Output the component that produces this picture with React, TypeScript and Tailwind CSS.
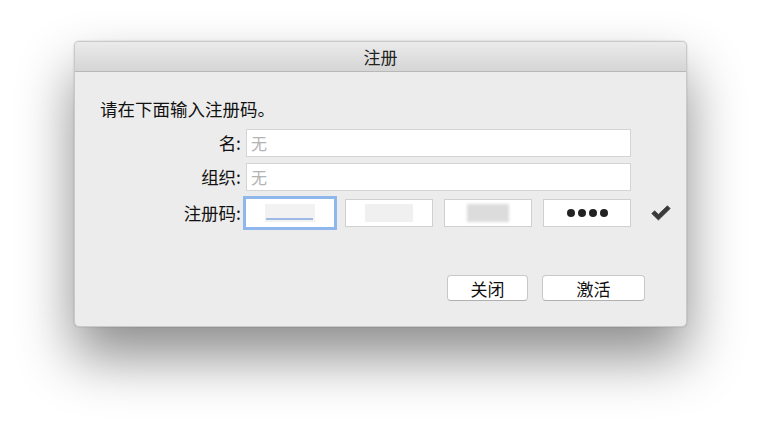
import React from 'react'

const font = { fontFamily: '"Noto Sans CJK SC", "Noto Sans", sans-serif' }

function Field({ placeholder }: { placeholder: string }) {
  return (
    <div className="flex h-[28px] w-[385px] items-center border border-[#d4d4d4] bg-white px-[4px] text-[16px] font-normal text-[#b3b3b3]">
      {placeholder}
    </div>
  )
}

export default function App() {
  return (
    <div className="h-[433px] w-[760px] overflow-hidden bg-white pl-[74px] pt-[41px]" style={font}>
      <div className="flex h-[286px] w-[613px] flex-col overflow-hidden rounded-[5px] border border-[#c9c9c9] bg-[#ececec] shadow-[0_30px_55px_rgba(0,0,0,0.45),0_0_2px_rgba(0,0,0,0.2)]">
        <div className="flex h-[30px] shrink-0 items-center justify-center border-b border-[#b8b8b8] bg-gradient-to-b from-[#ebebeb] to-[#d5d5d5] text-[17px] text-[#222]">
          注册
        </div>
        <div className="flex flex-1 flex-col pl-[25px] pt-[24px]">
          <div className="text-[17.5px] leading-[26px] text-[#111]">请在下面输入注册码。</div>
          <div className="mt-[7px] grid grid-cols-[141px_auto] items-center gap-x-[5px] gap-y-[6px] text-[17.5px] text-[#111]">
            <div className="text-right">名:</div>
            <Field placeholder="无" />
            <div className="text-right">组织:</div>
            <Field placeholder="无" />
            <div className="mt-[2px] text-right">注册码:</div>
            <div className="mt-[2px] flex items-center gap-[11px]">
              <div className="flex h-[28px] w-[88px] items-center justify-center bg-white shadow-[0_0_0_3px_#8fb7ec]">
                <div className="relative h-[18px] w-[50px] bg-[#f2f2f2]">
                  <div className="absolute bottom-[2px] left-[1px] right-[2px] h-[2px] bg-[#9dbbe4]" />
                </div>
              </div>
              <div className="flex h-[28px] w-[88px] items-center justify-center border border-[#d0d0d0] bg-white">
                <div className="h-[18px] w-[48px] bg-[#f0f0f0]" />
              </div>
              <div className="flex h-[28px] w-[88px] items-center justify-center border border-[#d0d0d0] bg-white">
                <div className="h-[18px] w-[42px] bg-[#dcdcdc] blur-[1.5px]" />
              </div>
              <div className="flex h-[28px] w-[88px] items-center justify-center border border-[#d0d0d0] bg-white">
                <div className="flex gap-[3px]">
                  {[0, 1, 2, 3].map(i => (
                    <span key={i} className="h-[8px] w-[8px] rounded-full bg-[#222]" />
                  ))}
                </div>
              </div>
              <svg className="ml-[9px]" width="20" height="16" viewBox="0 0 20 16">
                <path d="M0.8 8.6 L3.6 5.8 L7.4 9.4 L16.4 0.8 L19.2 3.6 L7.4 15 Z" fill="#3a3a3a" stroke="#3a3a3a" strokeWidth="0.8" strokeLinejoin="round" />
              </svg>
            </div>
          </div>
          <div className="mr-[41px] mt-[48px] flex justify-end gap-[14px]">
            <button type="button" className="h-[26px] w-[81px] rounded-[4px] border border-[#c8c8c8] border-b-[#b0b0b0] bg-white text-[17px] leading-none text-[#111]">关闭</button>
            <button type="button" className="h-[26px] w-[103px] rounded-[4px] border border-[#c8c8c8] border-b-[#b0b0b0] bg-white text-[17px] leading-none text-[#111]">激活</button>
          </div>
        </div>
      </div>
    </div>
  )
}
